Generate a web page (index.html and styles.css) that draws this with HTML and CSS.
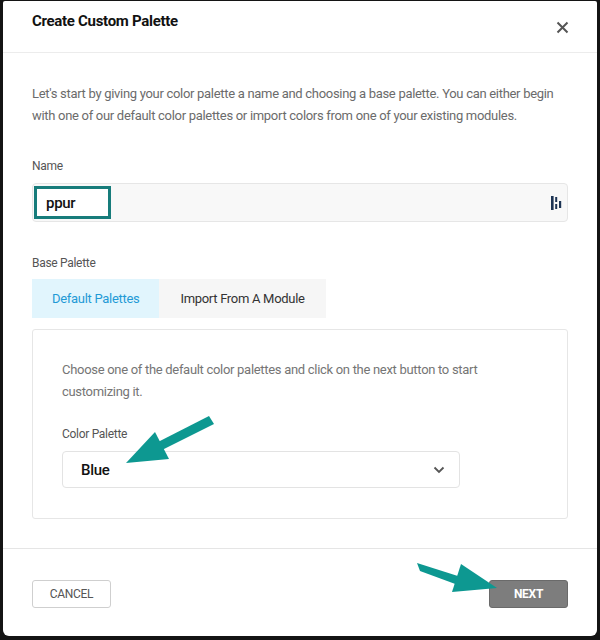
FILE: index.html
```html
<!DOCTYPE html>
<html lang="en">
<head>
    <meta charset="UTF-8">
    <meta name="viewport" content="width=device-width, initial-scale=1.0">
    <title>Create Custom Palette</title>
    <link rel="stylesheet" href="styles.css">
</head>
<body>
    <div class="dialog">
        <div class="dialog-header">
            <h1>Create Custom Palette</h1>
            <svg class="close" width="13" height="13" viewBox="0 0 13 13">
                <path d="M1.5 1.5 L11.5 11.5 M11.5 1.5 L1.5 11.5" stroke="#555" stroke-width="2"/>
            </svg>
        </div>

        <div class="dialog-body">
            <p class="intro">Let's start by giving your color palette a name and choosing a base palette. You can either begin with one of our default color palettes or import colors from one of your existing modules.</p>

            <label class="field-label">Name</label>
            <div class="name-input">
                <span class="name-value">ppur</span>
                <svg class="pm-icon" width="12" height="16" viewBox="0 0 12 16">
                    <rect x="0" y="1" width="2.6" height="14" fill="#1d3454"/>
                    <rect x="4.2" y="2" width="2" height="5" fill="#1d3454"/>
                    <rect x="4.2" y="9" width="2" height="5" fill="#1d3454"/>
                    <rect x="8" y="6" width="2.2" height="7" fill="#1d3454"/>
                </svg>
            </div>

            <label class="field-label base-label">Base Palette</label>
            <div class="tabs">
                <div class="tab active">Default Palettes</div>
                <div class="tab">Import From A Module</div>
            </div>

            <div class="tab-panel">
                <p class="panel-text">Choose one of the default color palettes and click on the next button to start customizing it.</p>
                <label class="field-label palette-label">Color Palette</label>
                <div class="select">
                    <span>Blue</span>
                    <svg width="12" height="8" viewBox="0 0 12 8">
                        <path d="M1.5 1.5 L6 6 L10.5 1.5" fill="none" stroke="#555" stroke-width="1.8"/>
                    </svg>
                </div>
            </div>
        </div>

        <div class="dialog-footer">
            <button class="btn btn-cancel">Cancel</button>
            <button class="btn btn-next">Next</button>
        </div>
    </div>

    <!-- pointer arrows drawn over the form -->
    <svg class="arrows" width="600" height="640" viewBox="0 0 600 640">
        <g fill="#0d9891">
            <polygon points="209,416 214,424 160,451 156,443"/>
            <polygon points="126,463 155,432 169,459"/>
            <polygon points="417,563 420,571 458,585 461,577"/>
            <polygon points="497,588 461,564 452,592"/>
        </g>
    </svg>
</body>
</html>
```

FILE: styles.css
```css
body {
    margin: 0;
    padding: 1px 3px 4px 3px;
    background: #141414;
    font-family: Roboto, 'Noto Sans', sans-serif;
    letter-spacing: -0.3px;
    color: #333;
}
.dialog {
    height: 635px;
    background: white;
    border-radius: 2px 2px 6px 6px;
    display: flex;
    flex-direction: column;
}
.dialog-header {
    height: 51px;
    border-bottom: 1px solid #ececec;
    display: flex;
    justify-content: space-between;
    align-items: flex-start;
    padding: 0 28px 0 29px;
}
.dialog-header h1 {
    margin: 11px 0 0;
    font-size: 15px;
    font-weight: 700;
    color: #111;
}
.close {
    margin-top: 20px;
}
.dialog-body {
    padding: 30px 29px 29px;
    display: flex;
    flex-direction: column;
}
.intro {
    margin: 0;
    font-size: 13px;
    line-height: 22px;
    color: #6b6b6b;
}
.field-label {
    display: block;
    font-size: 12px;
    line-height: 16px;
    color: #555;
    margin-top: 31px;
    margin-bottom: 9px;
}
.name-input {
    height: 37px;
    border: 1px solid #e6e6e6;
    border-radius: 4px;
    background: #f8f8f8;
    display: flex;
    align-items: center;
    justify-content: space-between;
    padding: 0 4px 0 1px;
}
.name-value {
    box-sizing: border-box;
    width: 77px;
    height: 33px;
    border: 3px solid #177c7b;
    padding-left: 9px;
    display: flex;
    align-items: center;
    font-size: 15px;
    font-weight: 500;
    color: #111;
    background: white;
}
.base-label {
    margin-top: 33px;
    margin-bottom: 8px;
}
.tabs {
    display: flex;
}
.tab {
    height: 39px;
    line-height: 39px;
    padding: 0 21px;
    font-size: 13px;
    background: #f6f6f6;
    color: #333;
}
.tab.active {
    padding: 0 20px;
    background: #e1f5fd;
    color: #1f9ad6;
}
.tab-panel {
    margin-top: 11px;
    border: 1px solid #e6e6e6;
    border-radius: 3px;
    padding: 29px 29px 30px;
}
.panel-text {
    margin: 0;
    font-size: 13px;
    line-height: 22px;
    color: #757575;
    max-width: 430px;
}
.palette-label {
    margin-top: 23px;
}
.select {
    width: 398px;
    box-sizing: border-box;
    height: 37px;
    border: 1px solid #e3e3e3;
    border-radius: 4px;
    display: flex;
    align-items: center;
    justify-content: space-between;
    padding: 0 14px 0 18px;
    font-size: 15px;
    font-weight: 500;
    color: #111;
}
.dialog-footer {
    border-top: 1px solid #e5e5e5;
    display: flex;
    justify-content: space-between;
    padding: 31px 29px 0;
}
.btn {
    height: 28px;
    width: 79px;
    border-radius: 3px;
    font-family: Roboto, sans-serif;
    font-size: 12px;
    letter-spacing: -0.3px;
    text-transform: uppercase;
}
.btn-cancel {
    background: white;
    border: 1px solid #cfcfcf;
    color: #555;
}
.btn-next {
    background: #7d7d7d;
    border: 1px solid #6a6a6a;
    color: white;
    font-weight: 700;
}
.arrows {
    position: absolute;
    top: 0;
    left: 0;
    pointer-events: none;
}
```
